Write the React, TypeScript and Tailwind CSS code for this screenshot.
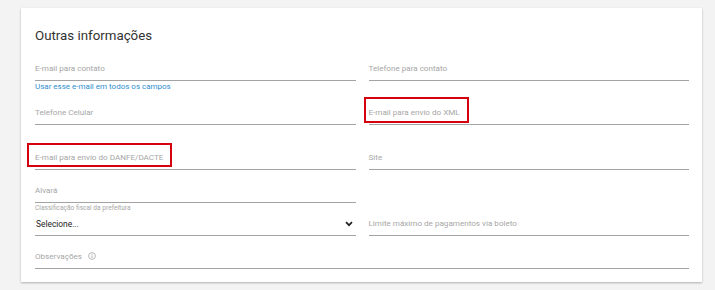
import React from 'react'

function Field ({ label, mark }: { label: string, mark?: string }) {
  return (
    <div className="h-[25px] flex items-center border-b border-[#a3a3a3]">
      <span className="relative text-[8.1px] leading-[12px] text-[#a6a6a6]">
        {label}
        {mark && <span className={`absolute border-2 border-[#d6000f] ${mark}`} />}
      </span>
    </div>
  )
}

export default function App () {
  return (
    <div className="min-h-[290px] bg-[#f3f3f3] pt-[8px] pl-[21px] pr-[13px] pb-[8px] font-['Roboto',sans-serif]">
      <div className="bg-white pt-[18px] pb-[13px] pl-[14px] pr-[13px] shadow-[0_1px_2px_rgba(0,0,0,0.28)]">
        <h2 className="text-[13.3px] leading-[20px] text-[#333]">Outras informações</h2>

        <div className="mt-[10px] grid grid-cols-2 gap-x-[13px]">
          <div>
            <Field label="E-mail para contato" />
            <div className="text-[8px] leading-[12px] text-[#2f8fcf]">Usar esse e-mail em todos os campos</div>
          </div>
          <Field label="Telefone para contato" />
        </div>

        <div className="mt-[7px] grid grid-cols-2 gap-x-[13px]">
          <Field label="Telefone Celular" />
          <Field label="E-mail para envio do XML" mark="-left-[5px] -right-[9px] -top-[9px] -bottom-[5px]" />
        </div>

        <div className="mt-[20px] grid grid-cols-2 gap-x-[13px]">
          <Field label="E-mail para envio do DANFE/DACTE" mark="-left-[8px] -right-[9px] -top-[8px] -bottom-[4px]" />
          <Field label="Site" />
        </div>

        <div className="mt-[8px] grid grid-cols-2 gap-x-[13px]">
          <Field label="Alvará" />
        </div>

        <div className="grid grid-cols-2 gap-x-[13px] items-end">
          <div>
            <div className="mt-[1px] h-[9px] text-[6.6px] leading-[9px] text-[#a6a6a6]">Classificação fiscal da prefeitura</div>
            <div className="h-[23px] flex items-center justify-between border-b border-[#a3a3a3] pl-[1px] pr-[2px]">
              <span className="text-[8.4px] leading-[12px] text-[#222]">Selecione...</span>
              <svg width="8" height="6" viewBox="0 0 8 6" className="mr-[1px]">
                <path d="M1 1.2 L4 4.2 L7 1.2" fill="none" stroke="#222" strokeWidth="1.7" />
              </svg>
            </div>
          </div>
          <Field label="Limite máximo de pagamentos via boleto" />
        </div>

        <div className="mt-[8px] h-[25px] flex items-center gap-[6px] border-b border-[#a3a3a3]">
          <span className="text-[8.1px] leading-[12px] text-[#a6a6a6]">Observações</span>
          <svg width="8" height="8" viewBox="0 0 8 8">
            <circle cx="4" cy="4" r="3.4" fill="none" stroke="#a6a6a6" strokeWidth="0.8" />
            <path d="M4 3.4 V6" stroke="#a6a6a6" strokeWidth="0.9" />
            <circle cx="4" cy="2.3" r="0.5" fill="#a6a6a6" />
          </svg>
        </div>
      </div>
    </div>
  )
}
